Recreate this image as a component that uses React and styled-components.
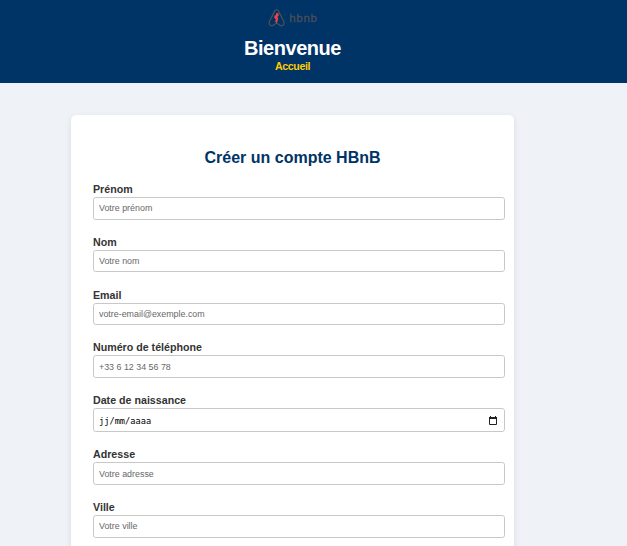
import React from "react";
import styled, { createGlobalStyle } from "styled-components";

const GlobalStyle = createGlobalStyle`
  * { box-sizing: border-box; }
  html { background: #eff3f8; }
  body {
    margin: 0;
    font-family: "Liberation Sans", Arial, sans-serif;
    color: #333;
  }
`;

const Page = styled.div`
  height: 546px;
  overflow: hidden;
`;

const Header = styled.header`
  height: 83px;
  padding: 8px 42px 0 0;
  background: #003366;
  display: flex;
  flex-direction: column;
  align-items: center;
`;

const Logo = styled.svg`
  width: 50px;
  height: 20px;
  display: block;
`;

const Title = styled.h1`
  margin: 8px 0 0;
  font-size: 20px;
  line-height: 24px;
  letter-spacing: -0.45px;
  color: #fff;
`;

const HomeLink = styled.a`
  font-size: 10.67px;
  line-height: 12px;
  font-weight: bold;
  color: #ffcc00;
  letter-spacing: -0.4px;
`;

const Card = styled.main`
  width: 443px;
  height: 431px;
  margin: 32px 0 0 71px;
  padding: 32px 9px 0 22px;
  background: #fff;
  border-radius: 5.3px 5.3px 0 0;
  box-shadow: 0 2.7px 6.7px rgba(0, 0, 0, 0.1);
`;

const FormTitle = styled.h2`
  margin: 0 13px 14px 0;
  font-size: 16px;
  line-height: 21px;
  text-align: center;
  color: #003366;
`;

const Field = styled.div`
  display: flex;
  flex-direction: column;
  height: ${({ $tall }) => ($tall ? 54.4 : 52.75)}px;
`;

const Label = styled.label`
  height: 15px;
  font-size: 10.67px;
  line-height: 15px;
  font-weight: bold;
`;

const Input = styled.input`
  width: 412px;
  height: 22.7px;
  padding: 0 5px;
  border: 1px solid #c8c8c8;
  border-radius: 2.7px;
  background: #fff;
  font: 8.89px "Liberation Sans", Arial, sans-serif;
  outline: none;
  &::placeholder { color: #686868; opacity: 1; }
`;

const DateBox = styled.div`
  width: 412px;
  height: 24px;
  padding: 1px 7px 0 5px;
  border: 1px solid #c8c8c8;
  border-radius: 2.7px;
  display: flex;
  align-items: center;
  justify-content: space-between;
  font: 8.67px "DejaVu Sans Mono", monospace;
  color: #000;
`;

const CalendarIcon = styled.svg`
  width: 8px;
  height: 9px;
  margin-top: -1px;
`;

const fields = [
  { id: "prenom", label: "Prénom", hint: "Votre prénom" },
  { id: "nom", label: "Nom", hint: "Votre nom" },
  { id: "email", label: "Email", hint: "votre-email@exemple.com" },
  { id: "tel", label: "Numéro de téléphone", hint: "+33 6 12 34 56 78" },
  { id: "naissance", label: "Date de naissance", hint: "jj/mm/aaaa", date: true },
  { id: "adresse", label: "Adresse", hint: "Votre adresse" },
  { id: "ville", label: "Ville", hint: "Votre ville" },
];

function HbnbLogo() {
  return (
    <Logo viewBox="0 0 50 20" role="img" aria-label="hbnb">
      <path
        d="M8.6 1.7C7.5 1.7 7 2.5 6.5 3.4L1.5 13.2C.5 15.3 1.4 17.8 3.8 17.8C5.7 17.8 7.1 16.3 8.6 14.6C10.1 16.3 11.5 17.8 13.4 17.8C15.8 17.8 16.7 15.3 15.7 13.2L10.7 3.4C10.2 2.5 9.7 1.7 8.6 1.7Z"
        fill="none"
        stroke="#474f59"
        strokeWidth="1.3"
      />
      <path d="M8.3 5L10.5 5.2L10.7 7.8L9.4 8.8L10.2 10.5L9.6 13.2L8.4 15L7.1 13.3L7.9 11.2L6.2 9.7L6.5 7.6L7.9 7.2Z" fill="#f04444" />
      <text x="21.3" y="14.3" fontFamily="Liberation Sans, Arial, sans-serif" fontSize="11.7" fill="#474f59" stroke="#474f59" strokeWidth=".3" textLength="27.7">
        hbnb
      </text>
    </Logo>
  );
}

function FormField({ id, label, hint, date }) {
  return (
    <Field $tall={date}>
      <Label htmlFor={id}>{label}</Label>
      {date ? (
        <DateBox id={id}>
          <span>{hint}</span>
          <CalendarIcon viewBox="0 0 8 9">
            <path d="M.5 2.5V8.5H7.5V2.5Z" fill="none" stroke="#222" />
            <path d="M0 1H8V3H0ZM1 0H2V1H1ZM6 0H7V1H6Z" fill="#222" />
          </CalendarIcon>
        </DateBox>
      ) : (
        <Input id={id} placeholder={hint} />
      )}
    </Field>
  );
}

export default function App() {
  return (
    <Page>
      <GlobalStyle />
      <Header>
        <HbnbLogo />
        <Title>Bienvenue</Title>
        <HomeLink>Accueil</HomeLink>
      </Header>
      <Card>
        <FormTitle>Créer un compte HBnB</FormTitle>
        {fields.map((field) => (
          <FormField key={field.id} {...field} />
        ))}
      </Card>
    </Page>
  );
}
